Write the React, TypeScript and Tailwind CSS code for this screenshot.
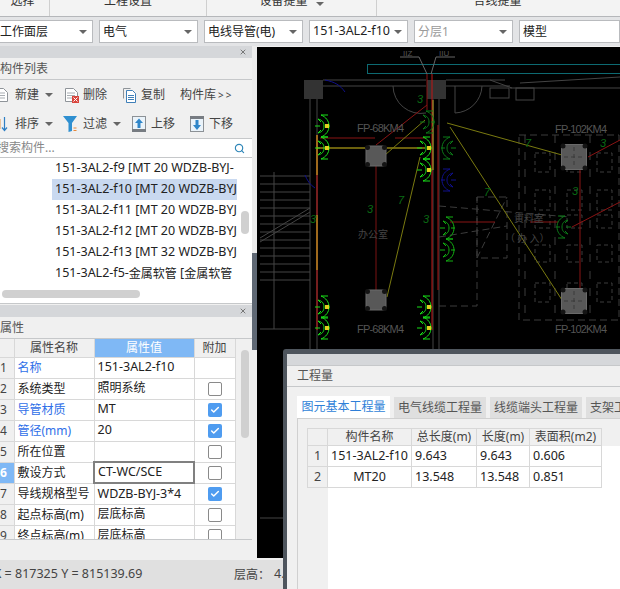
import React from 'react'
import { Search, X, Check } from 'lucide-react'

const selects = [
  { label: '工作面层', cls: 'w-[94px] -ml-px !pl-0', gray: false },
  { label: '电气', cls: 'w-[99px]', gray: false },
  { label: '电线导管(电)', cls: 'w-[99px]', gray: false },
  { label: '151-3AL2-f10', cls: 'w-[99px]', gray: false, latin: true },
  { label: '分层1', cls: 'w-[99px]', gray: true },
]

const listItems = [
  { name: '151-3AL2-f9', rest: ' [MT 20 WDZB-BYJ-' },
  { name: '151-3AL2-f10', rest: ' [MT 20 WDZB-BYJ', active: true },
  { name: '151-3AL2-f11', rest: ' [MT 20 WDZB-BYJ' },
  { name: '151-3AL2-f12', rest: ' [MT 20 WDZB-BYJ' },
  { name: '151-3AL2-f13', rest: ' [MT 32 WDZB-BYJ' },
]

const props = [
  { n: 1, name: '名称', value: '151-3AL2-f10', blue: true, check: null },
  { n: 2, name: '系统类型', value: '照明系统', check: false },
  { n: 3, name: '导管材质', value: 'MT', blue: true, check: true },
  { n: 4, name: '管径(mm)', value: '20', blue: true, check: true },
  { n: 5, name: '所在位置', value: '', check: false },
  { n: 6, name: '敷设方式', value: 'CT-WC/SCE', check: false, editing: true },
  { n: 7, name: '导线规格型号', value: 'WDZB-BYJ-3*4', check: true },
  { n: 8, name: '起点标高(m)', value: '层底标高', check: false },
  { n: 9, name: '终点标高(m)', value: '层底标高', check: false },
]

function Caret({ className = '' }: { className?: string }) {
  return <span className={`inline-block h-0 w-0 border-x-[4px] border-t-[4px] border-x-transparent border-t-[#666] ${className}`} />
}

function Select({ label, cls, gray, latin }: { label: string; cls: string; gray?: boolean; latin?: boolean }) {
  return (
    <div className={`flex h-[23px] shrink-0 items-center justify-between border border-[#b9bbbe] bg-white pl-[3px] pr-[5px] ${cls}`}>
      <span className={`${latin ? 'text-[12.5px]' : 'text-[12px]'} ${gray ? 'text-[#9a9a9a]' : 'text-[#222]'}`}>{label}</span>
      <Caret />
    </div>
  )
}

function PanelHead({ title }: { title: string }) {
  return (
    <>
      <div className="flex h-[12px] items-center justify-end bg-[#d5d7da] pr-[5px]">
        <X size={8} strokeWidth={3} className="text-[#777]" />
      </div>
      <div className="flex h-[22px] items-center border-b border-[#c6c8ca] text-[12px] text-[#555]">{title}</div>
    </>
  )
}

function PageIcon({ badge }: { badge?: boolean }) {
  return (
    <svg width="15" height="16" viewBox="0 0 15 16" className="shrink-0">
      <path d="M1.5 1.5h8l4 4v9h-12z" fill="#fff" stroke="#8f9499" />
      <path d="M3 6h8M3 8.500h8M3 11h8" stroke="#a8adb2" />
      {badge && <rect x="8" y="9" width="7" height="7" fill="#d9453d" />}
      {badge && <path d="M9.500 10.500l4 4M13.500 10.500l-4 4" stroke="#fff" />}
    </svg>
  )
}

function CopyIcon() {
  return (
    <svg width="15" height="16" viewBox="0 0 15 16" className="shrink-0">
      <path d="M1.500 11.500v-10h7" fill="none" stroke="#8f9499" />
      <path d="M4.500 3.500h6l3 3v9h-9z" fill="#fff" stroke="#3f7fb8" />
      <path d="M6 8.500h6M6 10.500h6M6 12.500h6" stroke="#3f7fb8" />
    </svg>
  )
}

function SortIcon() {
  return (
    <svg width="14" height="16" viewBox="0 0 14 16" className="shrink-0">
      <path d="M0 3h5v10H0z" fill="#fff" stroke="#e59a4c" />
      <path d="M9.500 1v13M7 11.500l2.500 3 2.500-3" fill="none" stroke="#2f7fc4" strokeWidth="1.200" />
    </svg>
  )
}

function FunnelIcon() {
  return (
    <svg width="15" height="16" viewBox="0 0 15 16" className="shrink-0">
      <path d="M0 0h14L9 7v8L5.500 16V7z" fill="#2e8fd0" />
      <path d="M10.500 12h3M10.500 14.500h3" stroke="#e8873a" strokeWidth="1.200" />
    </svg>
  )
}

function MoveIcon({ up }: { up?: boolean }) {
  return (
    <svg width="14" height="16" viewBox="0 0 14 16" className="shrink-0">
      <rect x="0.500" y="0.500" width="13" height="15" fill="#eaf3fa" stroke="#8c9196" />
      <rect x="0" y={up ? 13 : 0} width="14" height="3" fill="#777c82" />
      {up
        ? <path d="M7 2.500L11 7H8.500v5h-3V7H3z" fill="#2f86c9" />
        : <path d="M7 14L11 9H8.500V4h-3v5H3z" fill="#2f86c9" />}
    </svg>
  )
}

function Fixture({ x, y, flip, color = '#18e018', dot = true }: { x: number; y: number; flip?: boolean; color?: string; dot?: boolean }) {
  return (
    <g transform={`translate(${x} ${y}) scale(${flip ? -1 : 1} 1)`} fill="none" stroke={color} strokeWidth="1">
      <path d="M-8 0H-3M3 0H7" />
      <path d="M-5 -7C-1 -6 1 -4 1 0C1 4 -1 6 -5 7" />
      <path d="M-2 -11C3 -9 6 -5 6 0C6 5 3 9 -2 11" />
      <path d="M-2 -11H5M-2 11H5" />
      <path d="M-5 -7L-2 -4M-5 7L-2 4" />
      {dot && <rect x="2" y="-2" width="4" height="4" fill="#e0d020" stroke="none" />}
    </g>
  )
}

function Fan({ x, y, size }: { x: number; y: number; size: number }) {
  const h = size / 2
  return (
    <g>
      <rect x={x - h} y={y - h} width={size} height={size} rx="2" fill="#585858" stroke="#6a6a6a" />
      {[[-1, -1], [1, -1], [-1, 1], [1, 1]].map(([a, b]) => (
        <circle key={`${a}${b}`} cx={x + a * (h - 1.500)} cy={y + b * (h - 1.500)} r="2.500" fill="#141414" />
      ))}
    </g>
  )
}

function CadDrawing() {
  const stairs = [176, 184, 192, 200, 208, 216, 224, 232, 240, 248, 256, 264, 272, 280]
  const squares = [535, 567, 597]
  const rows: [number, number][] = [[153, 19], [190, 20], [215, 13], [245, 17], [283, 19]]
  return (
    <svg viewBox="257 47 363 511" className="block h-full w-full" preserveAspectRatio="xMinYMin slice">
      <rect x="257" y="47" width="363" height="511" fill="#000" />
      {/* walls */}
      <g stroke="#444" fill="none">
        <path d="M323 80H426M323 86H426M446 80H505M446 86H510M310 99V558M317 99V558M433 99V558M439 99V558" />
        <path d="M393 86A28 28 0 0 0 426 113M455 86V113A28 28 0 0 0 482 86" />
        <path d="M490 80L512 88M510 88H620M520 83L620 77" />
        <rect x="490" y="88" width="19" height="10" />
        <rect x="516" y="88" width="18" height="12" />
        <path d="M260 329H310M274 172V329M260 518H310" />
        <path d="M260 238L310 208M260 242L310 212" />
        {stairs.map(y => <path key={y} d={`M260 ${y}H310`} />)}
      </g>
      <rect x="304" y="80" width="19" height="19" fill="#333" />
      <rect x="427" y="80" width="19" height="19" fill="#333" />
      <rect x="367.500" y="64.500" width="260" height="9" fill="none" stroke="#0d6a72" />
      {/* leaders */}
      <g stroke="#666" fill="none">
        <path d="M400 57H419L427 74M455 57H436L431 74" />
      </g>
      <text x="403" y="56" fontSize="8" fill="#555" fontFamily="Liberation Sans, sans-serif">IIZ</text>
      <text x="439" y="56" fontSize="8" fill="#555" fontFamily="Liberation Sans, sans-serif">IIU</text>
      {/* dashed lines */}
      <g stroke="#3c3c3c" fill="none" strokeDasharray="7 4">
        <rect x="477" y="197" width="30" height="61" />
        <path d="M439 306H477V197M439 206L570 217M439 237L507 226M477 258L507 197" />
        <rect x="519" y="135" width="100" height="185" />
        <path d="M525 135V320M555 135V320M590 135V320" strokeDasharray="8 9" />
        {squares.map(x => rows.map(([y, h]) => <rect key={`${x}-${y}`} x={x} y={y} width="15" height={h} strokeDasharray="4 3" />))}
      </g>
      {/* conduit */}
      <g fill="none">
        <path d="M317 135V330" stroke="#c91a1a" />
        <path d="M317 135V175M317 215V270" stroke="#c9b41a" />
        <path d="M432 74V330" stroke="#c01616" />
        <path d="M427 74V110" stroke="#8b1414" />
        <path d="M433 100V170" stroke="#b8a020" />
        <path d="M438 125V290" stroke="#a81515" />
        <path d="M317 148H425" stroke="#d6c21a" />
        <path d="M320 138H375M395 138H425" stroke="#8a1414" />
        <path d="M376 145L427 105" stroke="#8a1414" />
        <path d="M376 165V290" stroke="#7a1212" />
        <path d="M385 155L425 120" stroke="#7a7a10" />
        <path d="M447 123L562 155" stroke="#7a7a10" />
        <path d="M450 127L562 300" stroke="#7a7a10" />
        <path d="M420 157L387 297" stroke="#7a7a10" />
        <path d="M450 222H495M530 222H558" stroke="#8a1414" />
        <path d="M572 227L620 202M588 157L620 140" stroke="#8a1414" />
        <path d="M580 170V290" stroke="#8a1414" />
        <path d="M325 80C335 82 340 85 345 92M305 175C307 180 310 185 315 188" stroke="#10108a" />
      </g>
      <Fan x={376} y={156} size={20} />
      <Fan x={376} y={300} size={20} />
      <Fan x={574} y={157} size={25} />
      <Fan x={574} y={301} size={25} />
      <g stroke="#3a3a3a" fill="none">
        <path d="M564 157H584M574 147V167M564 301H584M574 291V311" strokeDasharray="4 3" />
      </g>
      {/* lamps */}
      <Fixture x={323} y={126} />
      <Fixture x={323} y={148} />
      <Fixture x={425} y={148} />
      <Fixture x={425} y={170} />
      <Fixture x={428} y={122} color="#0c7a18" dot={false} />
      <Fixture x={448} y={148} flip color="#0c7a18" dot={false} />
      <Fixture x={448} y={180} flip color="#10108a" dot={false} />
      <Fixture x={448} y={228} color="#12b012" dot={false} />
      <Fixture x={448} y={250} color="#12b012" dot={false} />
      <Fixture x={563} y={227} flip color="#0c7a18" dot={false} />
      <Fixture x={323} y={307} />
      <Fixture x={323} y={328} />
      <Fixture x={425} y={307} />
      <Fixture x={425} y={328} />
      <g fontFamily="Liberation Sans, sans-serif" fontSize="11" fill="#555">
        <text x="357" y="132" textLength="47">FP-68KM4</text>
        <text x="357" y="333" textLength="47">FP-68KM4</text>
        <text x="555" y="133" textLength="52">FP-102KM4</text>
        <text x="555" y="333" textLength="52">FP-102KM4</text>
      </g>
      <g fontFamily="Liberation Sans, sans-serif" fontSize="11" fontStyle="italic" fill="#0a6a14">
        <text x="417" y="103">3</text>
        <text x="525" y="147">7</text>
        <text x="600" y="147">3</text>
        <text x="310" y="223">3</text>
        <text x="367" y="213">3</text>
        <text x="398" y="204">7</text>
        <text x="423" y="223">3</text>
        <text x="484" y="196">7</text>
        <text x="572" y="195">3</text>
      </g>
      <g fontFamily="Noto Sans CJK SC, sans-serif" fontSize="10" fill="#444">
        <text x="358" y="238">办公室</text>
        <text x="514" y="222">資料室</text>
        <text x="505" y="242">（ 办 入）</text>
      </g>
    </svg>
  )
}

export default function App() {
  return (
    <div className="relative flex h-[589px] w-[620px] flex-col overflow-hidden bg-[#f0f0f0] font-['Noto_Sans','Noto_Sans_CJK_SC',sans-serif] text-[12px] leading-none text-[#222]">
      {/* ribbon, only the bottom of its labels is in view */}
      <div className="flex h-[17px] shrink-0 border-b border-[#b5b7ba] bg-[#f3f3f3] text-[12px] text-[#333]">
        <div className="flex w-[50px] items-start justify-center overflow-hidden border-r border-[#cfcfcf] pr-1"><span className="-translate-y-[5px]">选择</span></div>
        <div className="flex w-[157px] items-start justify-center overflow-hidden border-r border-[#cfcfcf]"><span className="-translate-y-[5px]">工程设置</span></div>
        <div className="flex w-[170px] items-start justify-center gap-2 overflow-hidden border-r border-[#cfcfcf]"><span className="-translate-y-[5px]">设备提量</span><Caret className="mt-[2px]" /></div>
        <div className="flex flex-1 items-start justify-center overflow-hidden pr-[2px]"><span className="-translate-y-[5px]">合线提量</span></div>
      </div>

      {/* selectors */}
      <div className="flex h-[29px] shrink-0 items-center gap-[6px] bg-[#e3e4e6]">
        {selects.map(s => <Select key={s.label} {...s} />)}
        <div className="flex h-[23px] flex-1 items-center border border-[#b9bbbe] bg-white pl-[3px] text-[12px]">模型</div>
      </div>

      <div className="flex min-h-0 flex-1">
        {/* left column */}
        <div className="flex w-[252px] shrink-0 flex-col">
          <PanelHead title="构件列表" />
          <div className="flex h-[29px] items-center whitespace-nowrap text-[#444]">
            <div className="flex w-[64px] items-center gap-[6px] -ml-[6px]"><PageIcon /><span>新建</span><Caret /></div>
            <div className="ml-[6px] flex w-[58px] items-center gap-[4px]"><PageIcon badge /><span>删除</span></div>
            <div className="flex w-[58px] items-center gap-[4px]"><CopyIcon /><span>复制</span></div>
            <div className="flex items-center gap-[2px]"><span>构件库</span><span className="text-[10px] tracking-[2px]">&gt;&gt;</span></div>
          </div>
          <div className="flex h-[30px] items-center whitespace-nowrap border-b border-[#c6c8ca] text-[#444]">
            <div className="flex w-[63px] items-center gap-[6px] -ml-[5px]"><SortIcon /><span>排序</span><Caret /></div>
            <div className="ml-[5px] flex w-[69px] items-center gap-[5px]"><FunnelIcon /><span>过滤</span><Caret className="ml-[1px]" /></div>
            <div className="flex w-[58px] items-center gap-[5px]"><MoveIcon up /><span>上移</span></div>
            <div className="flex items-center gap-[5px]"><MoveIcon /><span>下移</span></div>
          </div>
          <div className="flex h-[19px] items-center justify-between overflow-hidden border-b border-[#c6c8ca] bg-white pr-[7px] text-[#888]">
            <span className="-ml-[3px]">搜索构件...</span>
            <Search size={11} strokeWidth={2.5} className="text-[#2f86b8]" />
          </div>
          {/* tree list */}
          <div className="relative h-[146px] overflow-hidden border-b border-[#c6c8ca] bg-white">
            <div className="w-[237px] overflow-hidden whitespace-nowrap">
              {listItems.map(it => (
                <div key={it.name} className={`flex h-[21px] items-center pl-[55px] text-[12.5px] ${it.active ? 'ml-[52px] bg-[#c9d9f0] !pl-[3px]' : ''}`}>
                  {it.name}{it.rest}
                </div>
              ))}
              <div className="flex h-[21px] items-center pl-[55px] text-[12.5px]">
                151-3AL2-f5-<span className="text-[12px]">金属软管</span>&nbsp;[<span className="text-[12px]">金属软管</span>
              </div>
            </div>
            <div className="absolute left-[241px] top-[53px] h-[23px] w-[8px] rounded bg-[#d0d0d0]" />
            <div className="absolute left-[2px] top-[132px] h-[8px] w-[138px] rounded bg-[#d0d0d0]" />
          </div>
          <div className="h-[1px]" />

          <PanelHead title="属性" />
          <div className="relative h-[201px] overflow-hidden border-b border-[#c6c8ca]">
            <table className="w-[235px] table-fixed border-collapse bg-white">
              <colgroup>
                <col className="w-[14px]" />
                <col className="w-[80px]" />
                <col className="w-[100px]" />
                <col className="w-[41px]" />
              </colgroup>
              <thead>
                <tr className="h-[18px] bg-[#f0f0f0] text-[#444]">
                  <th className="border-b border-r border-[#d8d8d8] font-normal" />
                  <th className="border-b border-r border-[#d8d8d8] font-normal">属性名称</th>
                  <th className="border-b border-r border-[#d8d8d8] bg-[#7fb8f5] font-normal text-white">属性值</th>
                  <th className="border-b border-r border-[#d8d8d8] font-normal">附加</th>
                </tr>
              </thead>
              <tbody>
                {props.map(p => (
                  <tr key={p.n} className="h-[21px]">
                    <td className={`border-b border-r border-[#d8d8d8] pr-[7px] text-right ${p.editing ? 'bg-[#7fb8f5] font-bold text-white' : 'bg-[#f0f0f0] text-[#444]'}`}>{p.n}</td>
                    <td className={`whitespace-nowrap border-b border-r border-[#d8d8d8] pl-[3px] ${p.blue ? 'text-[#2f6fe8]' : ''}`}>{p.name}</td>
                    <td className={`whitespace-nowrap pl-[3px] text-[12.5px] ${p.editing ? 'border-2 border-[#808080]' : 'border-b border-r border-[#d8d8d8]'}`}>
                      {/[A-Za-z0-9]/.test(p.value) ? p.value : <span className="text-[12px]">{p.value}</span>}
                    </td>
                    <td className="border-b border-r border-[#d8d8d8]">
                      {p.check === true && (
                        <span className="mx-auto flex h-[14px] w-[14px] items-center justify-center rounded-[2px] bg-[#4f9cf0]">
                          <Check size={10} strokeWidth={3.5} className="text-white" />
                        </span>
                      )}
                      {p.check === false && <span className="mx-auto block h-[14px] w-[14px] rounded-[2px] border border-[#8a8a8a] bg-white" />}
                    </td>
                  </tr>
                ))}
              </tbody>
            </table>
            <div className="absolute left-[241px] top-[11px] h-[88px] w-[8px] rounded bg-[#d0d0d0]" />
          </div>
        </div>

        {/* splitter */}
        <div className="flex w-[5px] shrink-0 flex-col bg-[#f0f0f0]">
          <div className="h-[207px] bg-[#ececec]" />
          <div className="h-[97px] bg-[#5f6874]" />
        </div>

        {/* drawing */}
        <div className="mb-[2px] mt-[1px] min-w-0 flex-1 overflow-hidden bg-black">
          <CadDrawing />
        </div>
      </div>

      {/* status bar */}
      <div className="flex h-[29px] shrink-0 items-center whitespace-nowrap bg-[#e0e0e0] text-[12.5px] text-[#444]">
        <span className="-ml-[6px] w-[240px]">X = 817325 Y = 815139.69</span>
        <span className="text-[12px]">层高：</span>
        <span className="ml-[4px]">4.2</span>
      </div>

      {/* quantities dialog */}
      <div className="absolute bottom-0 left-[283px] right-0 top-[349px] rounded-tl-[3px] bg-[#4e555d] pl-[4px] pt-[5px]">
        <div className="flex h-full flex-col bg-[#f0f0f0]">
          <div className="h-[11px] shrink-0 bg-[#d5d7da]" />
          <div className="flex h-[22px] shrink-0 items-center border-y border-[#c6c8ca] pl-[10px] text-[#555]">工程量</div>
          <div className="flex h-[31px] shrink-0 items-end gap-[4px] pl-[10px]">
            <div className="flex h-[22px] w-[93px] shrink-0 items-center justify-center bg-white text-[#2e7fd8]">图元基本工程量</div>
            <div className="flex h-[21px] w-[92px] shrink-0 items-center justify-center bg-[#dfdfdf] text-[#555]">电气线缆工程量</div>
            <div className="flex h-[21px] w-[92px] shrink-0 items-center justify-center bg-[#dfdfdf] text-[#555]">线缆端头工程量</div>
            <div className="flex h-[21px] w-[60px] shrink-0 items-center overflow-hidden whitespace-nowrap bg-[#dfdfdf] pl-[4px] text-[#555]">支架工程量</div>
          </div>
          <div className="ml-[10px] min-h-0 flex-1 overflow-hidden border-l border-t border-[#d0d0d0] pl-[9px] pt-[9px]">
            <div className="flex h-full flex-col overflow-hidden bg-white">
              <div className="flex h-[18px] shrink-0 bg-[#f0f0f0] text-[#444]">
                <div className="w-[21px] border border-[#d8d8d8]" />
                <div className="flex w-[84px] items-center justify-center border-y border-r border-[#d8d8d8]">构件名称</div>
                <div className="flex w-[65px] items-center justify-center border-y border-r border-[#d8d8d8]">总长度(m)</div>
                <div className="flex w-[53px] items-center justify-center border-y border-r border-[#d8d8d8]">长度(m)</div>
                <div className="flex w-[72px] items-center justify-center border-y border-r border-[#d8d8d8]">表面积(m2)</div>
              </div>
              {[['1', '151-3AL2-f10', '9.643', '9.643', '0.606'], ['2', 'MT20', '13.548', '13.548', '0.851']].map(r => (
                <div key={r[0]} className="flex h-[21px] shrink-0 text-[12.5px]">
                  <div className="flex w-[21px] items-center justify-center border-x border-b border-[#d8d8d8] bg-[#f0f0f0] text-[#444]">{r[0]}</div>
                  <div className="flex w-[84px] items-center justify-center whitespace-nowrap border-b border-r border-[#d8d8d8]">{r[1]}</div>
                  <div className="flex w-[65px] items-center border-b border-r border-[#d8d8d8] pl-[3px]">{r[2]}</div>
                  <div className="flex w-[53px] items-center border-b border-r border-[#d8d8d8] pl-[3px]">{r[3]}</div>
                  <div className="flex w-[72px] items-center border-b border-r border-[#d8d8d8] pl-[3px]">{r[4]}</div>
                </div>
              ))}
              <div className="w-[21px] flex-1 bg-[#f0f0f0]" />
            </div>
          </div>
        </div>
      </div>
    </div>
  )
}
